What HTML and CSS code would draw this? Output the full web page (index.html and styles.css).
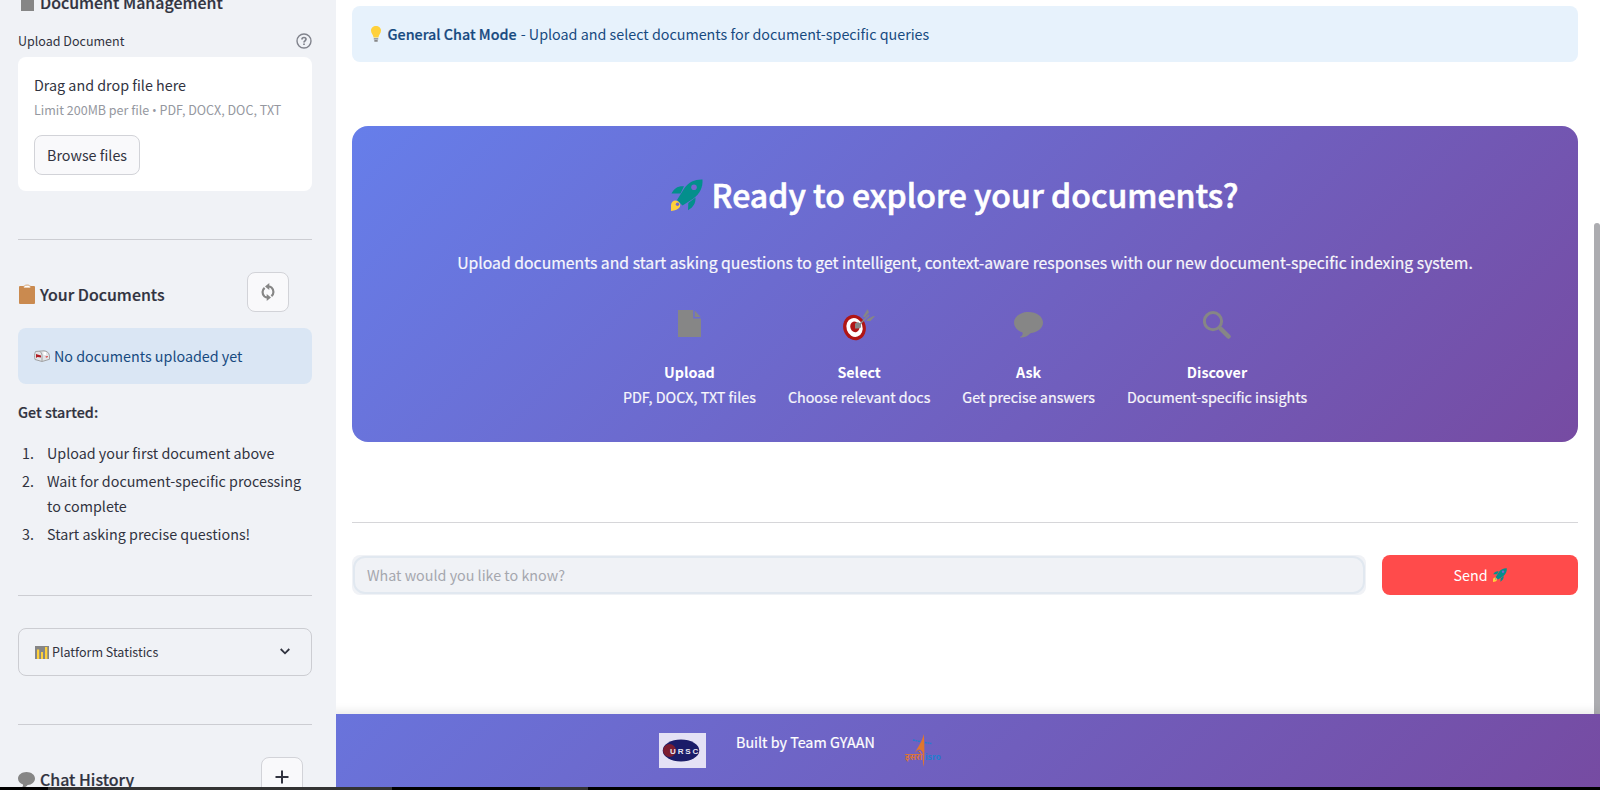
FILE: index.html
```html
<!DOCTYPE html>
<html lang="en">
<head>
<meta charset="utf-8">
<title>Document Chat</title>
<link rel="stylesheet" href="styles.css">
</head>
<body>
<svg class="defs" width="0" height="0" aria-hidden="true">
  <symbol id="rocket" viewBox="0 0 32 32" preserveAspectRatio="none">
    <path fill="#038f8c" d="M31.500.500C24 .2 18 3 13.500 9L6 21l5.500 5.500 11-7C29 14.500 32 8 31.500.500z"/>
    <path fill="#038f8c" d="M.500 14.500C3 9.500 6.500 6.800 13 7.200L9.500 14.500zM24.500 18.500C24.800 24.500 22 28.500 17 31.200l.3-7.200z"/>
    <path fill="#ffd13b" d="M0 32V26c.5-4 3.500-5.500 6.500-4 2.500 1.500 3.500 3.500 2.300 6C7.500 30.500 4 31.500 0 32z"/>
    <circle cx="23" cy="8.300" r="2.800" fill="#7667ce"/>
    <circle cx="6.500" cy="25.300" r="1.700" fill="#7667ce"/>
  </symbol>
  <symbol id="bubble" viewBox="0 0 30 27">
    <path fill="#868686" d="M15 0c8.300 0 15 4.800 15 11s-5.800 10.500-13 11c-2.500 3-6 4.600-10.500 4.500-.4 0-.4-.5 0-.7 2-1 2.800-2.600 2.300-4.600C3.700 19.500 0 16 0 11 0 4.800 6.700 0 15 0z"/>
  </symbol>
</svg>
<div class="app">
  <aside class="sidebar">
    <h3 class="side-title first"><svg class="ico" width="17" height="17" viewBox="0 0 17 17"><path fill="#868686" d="M3 0h13v17H3z"/></svg><span>Document Management</span></h3>
    <div class="label"><span>Upload Document</span>
      <svg width="16" height="16" viewBox="0 0 16 16" fill="none" stroke="#81838c" stroke-width="1.400"><circle cx="8" cy="8" r="7"/><path stroke-width="1.700" d="M6 6.500c0-1.200.8-2 2-2s2 .7 2 1.800c0 1.400-2 1.600-2 3.100M8 10.500v1.500"/></svg>
    </div>
    <div class="dropzone">
      <div class="drop-main">Drag and drop file here</div>
      <div class="drop-sub">Limit 200MB per file <span class="dot">•</span> PDF, DOCX, DOC, TXT</div>
      <button class="btn browse"><span class="up">Browse files</span></button>
    </div>
    <hr class="rule r1">
    <div class="title-row docs">
      <h3 class="side-title"><svg class="ico" width="17" height="20" viewBox="0 0 17 20"><rect x="1" y="2" width="16" height="18" rx="1" fill="#ca8a4f"/><path fill="#fff" stroke="#ca8a4f" stroke-width=".8" d="M5.500 4V2.700c0-.6.500-.8 1.200-.8C6.700.800 11.500.800 11.600 1.900c.7 0 1.100.2 1.100.8V4z"/></svg><span>Your Documents</span></h3>
      <button class="btn square"><svg class="sync" width="14" height="18" viewBox="0 0 14 18" fill="none" stroke="#868686" stroke-width="2.200"><path d="M3.600 4.800C1 7 .8 11 3.500 13.500M10.400 13.200C13 11 13.200 7 10.500 4.500 9.500 3.700 8.500 3.500 7.500 3.500M3.500 13.500c1 .8 2 1 3.500 1"/><path fill="#868686" stroke="none" d="M8.300 0v7L4 3.500zM5.700 11v7L10 14.500z"/></svg></button>
    </div>
    <div class="notice">
      <svg width="16" height="12" viewBox="0 0 16 12"><path fill="#e2e4e8" stroke="#999" stroke-width=".9" d="M1.500 1.500 10 .8c3 .2 5 2 5.500 5v3.500L8 11.500 1 9.500C.3 7 .3 4 1.500 1.500z"/><path fill="#b01c22" d="M2 4l1.500.500L7 5.500v2L3.500 7 2 8z"/><path fill="none" stroke="#999" stroke-width=".9" d="M8 11V5.500C8 3.500 7 1.800 5.500 1.500"/><path fill="#d66" d="M11.500 6h2.500v1l-2 1z"/><path fill="#fff" d="M9.500 2h2.500v3h-2.500z"/></svg><span class="up">No documents uploaded yet</span>
    </div>
    <p class="start">Get started:</p>
    <ol class="steps">
      <li><div>Upload your first document above</div></li>
      <li><div>Wait for document-specific processing<br>to complete</div></li>
      <li><div>Start asking precise questions!</div></li>
    </ol>
    <hr class="rule r2">
    <div class="expander">
      <svg width="14" height="13" viewBox="0 0 14 13"><path fill="#868686" d="M0 0h14v13H0z"/><path fill="#ffd13b" d="M2 3.500h2.200V13H2zM6 6h2v7H6zM10 1h2.300v12H10z"/></svg>
      <span class="exp-label up">Platform Statistics</span>
      <svg class="chev" width="10" height="7" viewBox="0 0 10 7"><path fill="none" stroke="#31333f" stroke-width="1.800" d="M.7 1 5 5.300 9.300 1"/></svg>
    </div>
    <hr class="rule r3">
    <div class="title-row chat">
      <h3 class="side-title"><svg class="ico bub" width="17" height="16" viewBox="0 0 30 27" preserveAspectRatio="none"><use href="#bubble"/></svg><span>Chat History</span></h3>
      <button class="btn square"><svg width="14" height="14" viewBox="0 0 14 14"><path fill="none" stroke="#31333f" stroke-width="2" d="M7 .5v13M.5 7h13"/></svg></button>
    </div>
  </aside>
  <main class="main">
    <div class="mode"><svg width="10" height="16" viewBox="0 0 9 16" preserveAspectRatio="none"><path fill="#ffd13b" d="M4.500 0C7 0 9 1.800 9 4.500 9 7.500 7 8.500 6.700 11.500H2.300C2 8.500 0 7.500 0 4.500 0 1.800 2 0 4.500 0z"/><path fill="#868686" d="M2.500 12.300h4v1.200h-4zM3 14h3v1.700H3z"/></svg><b class="up">General Chat Mode</b><span class="mode-rest up">- Upload and select documents for document-specific queries</span></div>
    <section class="hero">
      <h1><svg width="32" height="32"><use href="#rocket" width="32" height="32"/></svg><span>Ready to explore your documents?</span></h1>
      <p class="lead">Upload documents and start asking questions to get intelligent, context-aware responses with our new document-specific indexing system.</p>
      <div class="features">
        <div class="feature"><div class="pic"><svg class="doc" width="24" height="28" viewBox="0 0 24 28"><path fill="#868686" d="M0 0h15.200v8.500H23V27H0z"/><path fill="#868686" d="M16.700.500 22.700 7H16.700z"/></svg></div><b>Upload</b><span>PDF, DOCX, TXT files</span></div>
        <div class="feature"><div class="pic"><svg width="32" height="32" viewBox="0 0 32 32"><g transform="rotate(-18 11.500 18.500)"><ellipse cx="11.500" cy="18.500" rx="11.200" ry="12.800" fill="#b01515"/><ellipse cx="11.500" cy="18.500" rx="8" ry="9.500" fill="#fff"/><ellipse cx="12" cy="18" rx="4.500" ry="5.500" fill="#b01515"/></g><path fill="#868686" d="M12 19.500V14.500l3-1.500 3 2v3.500l-3 1zM20 7.500 24.500.300l1.500 3-4 5zM24.500 10l6-3h1.500l-4.500 5h-4z"/><path stroke="#868686" stroke-width="1.300" d="M16 16 26 6"/></svg></div><b>Select</b><span>Choose relevant docs</span></div>
        <div class="feature"><div class="pic"><svg width="29" height="26" viewBox="0 0 30 27" preserveAspectRatio="none"><use href="#bubble"/></svg></div><b>Ask</b><span>Get precise answers</span></div>
        <div class="feature"><div class="pic"><svg width="28" height="28" viewBox="0 0 28 28" fill="none" stroke="#868686"><circle cx="10" cy="10.200" r="8.600" stroke-width="3"/><path stroke-width="4.500" stroke-linecap="round" d="m18 18 7.500 7.500"/></svg></div><b>Discover</b><span>Document-specific insights</span></div>
      </div>
    </section>
    <hr class="rule wide">
    <div class="ask">
      <div class="field"><input type="text" placeholder="What would you like to know?"></div>
      <button class="send"><span class="up">Send</span><svg width="14" height="14"><use href="#rocket" width="14" height="14"/></svg></button>
    </div>
  </main>
  <div class="thumb"></div>
  <footer class="footer">
    <svg class="ursc" width="47" height="35" viewBox="0 0 47 35"><path fill="#e4e1f5" d="M0 0h47v35H0z"/><ellipse cx="22" cy="17.500" rx="18.300" ry="11" fill="#1b1c68"/><ellipse cx="10.500" cy="17.500" rx="6.500" ry="6.500" fill="#7c1d30"/><text x="11" y="20.500" class="ursc-text">URSC</text></svg>
    <span class="credit">Built by Team GYAAN</span>
    <svg class="isro" width="37" height="35" viewBox="0 0 37 35"><path fill="#e0762f" d="M18.800 1c.7 7 .9 26-.2 33-.8-4-1-9-.9-14.500C15 14 12 17 9.500 20.500 13 14 17 9 18.800 1z"/><path stroke="#1f7fd0" stroke-width="1.300" stroke-dasharray="2 .6" d="m8 7 7 1.500M20 9.500l6.500 1"/><text x="0" y="26.500" class="isro-hi" textLength="17" lengthAdjust="spacingAndGlyphs">इसरो</text><text x="20" y="26.500" class="isro-en" textLength="16" lengthAdjust="spacingAndGlyphs">isro</text></svg>
  </footer>
  <div class="taskbar"><i class="seg a"></i><i class="seg b"></i></div>
</div>
</body>
</html>
```
FILE: styles.css
```css
* { box-sizing: border-box; }
body {
  margin: 0;
  overflow: hidden;
  font-family: "Noto Sans CJK SC", "Noto Sans", sans-serif;
  font-size: 14.320px;
  line-height: 25px;
  color: #31333f;
  background: #fff;
}
svg { display: block; flex: none; }
.defs { position: absolute; }
h1, h3, p, ol { margin: 0; padding: 0; }
button, input { font: inherit; color: inherit; }
span, b, .drop-main, .drop-sub, li, button { white-space: nowrap; }
.up { padding-bottom: 2px; }
.app { position: relative; display: flex; width: 1600px; height: 790px; overflow: hidden; }

.sidebar {
  position: relative;
  z-index: 3;
  width: 336px;
  height: 787px;
  flex: none;
  overflow: hidden;
  padding: 0 24px 0 18px;
  background: #f0f2f6;
}
.side-title { display: flex; align-items: center; gap: 5px; font-size: 15.950px; font-weight: 500; line-height: 24px; -webkit-text-stroke: .2px currentColor; }
.side-title.first { margin-top: -10px; }
.side-title .ico { margin-top: 1px; }
.label { display: flex; justify-content: space-between; align-items: center; height: 20px; margin-top: 17px; font-size: 12.530px; line-height: 20px; }
.dropzone { height: 134px; margin-top: 6px; padding: 15px 16px; border-radius: 8px; background: #fff; }
.drop-main { line-height: 25px; }
.drop-sub { margin-top: 2px; font-size: 12.530px; line-height: 21px; color: #9598a0; }
.dot { font-family: "Open Sans", sans-serif; line-height: 1; }
.btn { display: flex; align-items: center; justify-content: center; height: 40px; padding: 0 12px; border: 1px solid #d2d3d8; border-radius: 8px; background: #f9f9fb; }
.browse { width: 106px; margin-top: 15px; }
.rule { height: 1px; margin: 0; border: 0; background: #cccdd2; }
.r1 { margin-top: 48px; }
.title-row { display: flex; align-items: flex-start; justify-content: space-between; height: 40px; }
.docs { margin-top: 32px; padding-right: 23px; }
.docs .side-title { margin-top: 10px; }
.docs .ico { margin-top: 0; margin-bottom: 1px; }
.sync { margin-right: 1px; }
.square { width: 42px; padding: 0; }
.notice { display: flex; align-items: center; gap: 4px; height: 56px; margin-top: 16px; padding: 0 16px; border-radius: 8px; background: #dae6f4; color: #174a80; }
.start { margin-top: 15px; font-weight: 500; -webkit-text-stroke: .2px currentColor; letter-spacing: .05px; }
.steps { margin-top: 16px; padding-left: 4px; list-style: none; counter-reset: step; }
.steps li { display: flex; margin-bottom: 3px; counter-increment: step; }
.steps li::before { content: counter(step) "."; flex: none; width: 25px; }
.r2 { margin-top: 49px; }
.expander { display: flex; align-items: center; height: 48px; margin-top: 32px; padding: 0 21px 0 16px; border: 1px solid #cccdd2; border-radius: 8px; font-size: 12.530px; }
.exp-label { margin-left: 3px; }
.chev { margin-left: auto; margin-bottom: 2px; }
.r3 { margin-top: 48px; }
.chat { margin-top: 32px; padding-right: 9px; }
.chat .side-title { margin-top: 10px; }

.main { width: 1264px; flex: none; padding: 6px 22px 0 16px; }
.mode { display: flex; align-items: center; height: 56px; padding: 0 19px; border-radius: 8px; background: #e7f2fc; color: #174a80; }
.mode b { margin-left: 6.500px; font-weight: 500; -webkit-text-stroke: .2px currentColor; }
.mode-rest { margin-left: 4px; }
.hero { height: 316px; margin-top: 64px; padding-top: 45px; border-radius: 16px; background: linear-gradient(135deg, #667eea 0%, #764ba2 100%); color: #fff; }
.hero h1 { display: flex; justify-content: center; align-items: center; gap: 9px; height: 48px; padding-right: 21px; font-size: 32px; font-weight: 500; line-height: 46px; -webkit-text-stroke: .6px currentColor; }
.hero h1 svg { -webkit-text-stroke: 0; }
.hero h1 span { padding-bottom: 2px; }
.lead { height: 28px; margin-top: 30px; font-size: 15.770px; line-height: 28px; text-align: center; white-space: nowrap; opacity: .95; -webkit-text-stroke: .2px currentColor; }
.features { display: flex; justify-content: center; gap: 32px; margin-top: 28px; }
.feature { display: flex; flex-direction: column; align-items: center; }
.feature b { font-weight: 700; }
.feature span { opacity: .95; -webkit-text-stroke: .2px currentColor; }
.pic { display: flex; align-items: center; height: 40px; margin-bottom: 14px; }
.doc { margin-left: 1px; margin-bottom: 2px; }
.wide { margin-top: 80px; background: #d6d6d9; }
.ask { display: flex; gap: 16px; margin-top: 32px; }
.field { width: 1014px; height: 40px; padding: 1px; border-radius: 8px; background: #f0f2f6; }
.field input { width: 100%; height: 38px; padding: 0 12px 2px; border: 2px solid #e1e8f0; border-radius: 12px; outline: 0; background: #f0f2f6; }
.field input::placeholder { color: #a5a7ae; opacity: 1; }
.send { display: flex; align-items: center; justify-content: center; gap: 5px; width: 196px; height: 40px; padding: 0; border: 0; border-radius: 8px; background: #ff4b4b; color: #fff; }

.thumb { position: absolute; right: 0; top: 223px; width: 6px; height: 500px; border-radius: 3px 3px 0 0; background: #acacb0; }
.footer { position: absolute; z-index: 2; left: 0; top: 714px; width: 1600px; height: 73px; display: flex; align-items: flex-start; padding: 19px 0 0 659px; background: linear-gradient(135deg, #667eea 0%, #764ba2 100%); box-shadow: 0 -2px 10px rgba(0, 0, 0, .1); color: #fff; }
.credit { margin: -4px 0 0 30px; -webkit-text-stroke: .2px currentColor; }
.isro { margin-left: 30px; }
.ursc-text { font: 700 8px "Liberation Sans", sans-serif; letter-spacing: 1.900px; fill: #e8e6f2; }
.isro-hi { font: 700 9px "Noto Sans Devanagari", "Noto Sans", sans-serif; fill: #d9733a; }
.isro-en { font: 700 9px "Noto Sans", sans-serif; fill: #1f7fd0; }
.taskbar { position: absolute; z-index: 4; left: 0; bottom: 0; width: 1600px; height: 3px; display: flex; padding-left: 48px; gap: 148px; background: #000; }
.seg { height: 3px; background: #333; }
.seg.a { width: 344px; }
.seg.b { width: 48px; }
```
